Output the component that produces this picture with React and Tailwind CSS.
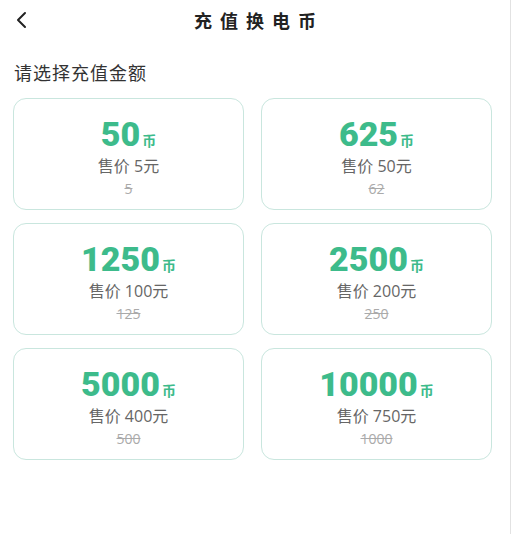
import React from 'react';

const PACKAGES = [
  { coins: 50, price: 5, original: 5 },
  { coins: 625, price: 50, original: 62 },
  { coins: 1250, price: 100, original: 125 },
  { coins: 2500, price: 200, original: 250 },
  { coins: 5000, price: 400, original: 500 },
  { coins: 10000, price: 750, original: 1000 },
];

const FONT = { fontFamily: 'Roboto, "Noto Sans CJK SC", sans-serif' };

function BackIcon() {
  return (
    <svg width="14" height="18" viewBox="0 0 14 18" fill="none">
      <polyline points="10,2 3,9 10,16" stroke="#222" strokeWidth="2" strokeLinecap="round" strokeLinejoin="round" />
    </svg>
  );
}

function PackageCard({ coins, price, original }) {
  return (
    <div className="h-[112px] rounded-[13px] border border-[#c9e6de] bg-white flex flex-col items-center pt-[17px]">
      <div className="flex items-baseline h-[36px] leading-[36px]">
        <span className="text-[34px] font-black text-[#3dbb8b]">{coins}</span>
        <span className="text-[14px] font-bold text-[#3dbb8b] ml-[2px]">币</span>
      </div>
      <div className="mt-[3px] h-[22px] leading-[22px] text-[16px] text-[#666] font-['Open_Sans','Noto_Sans_CJK_SC',sans-serif]">
        售价 {price}元
      </div>
      <div className="mt-[3px] h-[18px] leading-[18px] text-[14px] text-[#aaa] line-through font-['Open_Sans',sans-serif]">
        {original}
      </div>
    </div>
  );
}

export default function App() {
  return (
    <div className="w-[512px] min-h-[534px] bg-white" style={FONT}>
      <div className="w-[511px] min-h-[534px] border-r border-[#e2e2e2]">
        {/* Header */}
        <div className="relative h-[42px] flex items-center justify-center">
          <div className="absolute left-[15px] top-[11px]">
            <BackIcon />
          </div>
          <h1 className="text-[18px] font-bold text-[#222] tracking-[8px] pl-[8px]">充值换电币</h1>
        </div>

        {/* Section title */}
        <div className="px-[14px] pt-[20px] pb-[12px]">
          <p className="text-[18px] leading-[24px] text-[#333] tracking-[1px]">请选择充值金额</p>
        </div>

        {/* Packages */}
        <div className="grid grid-cols-[231px_231px] gap-x-[17px] gap-y-[13px] px-[13px]">
          {PACKAGES.map(p => (
            <PackageCard key={p.coins} {...p} />
          ))}
        </div>
      </div>
    </div>
  );
}
